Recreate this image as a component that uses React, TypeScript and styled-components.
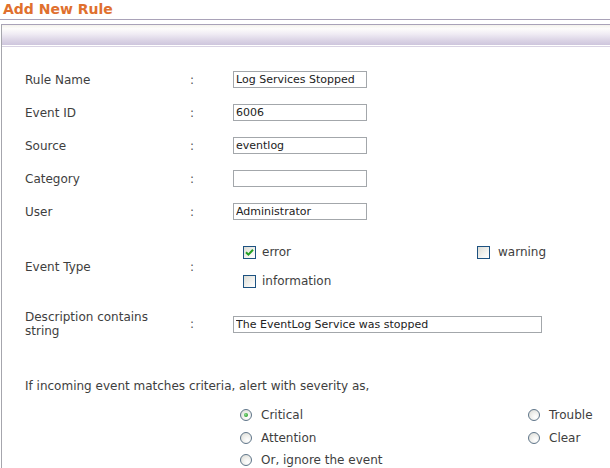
import React from "react";
import styled, { createGlobalStyle } from "styled-components";

const Global = createGlobalStyle`
  html, body { margin: 0; padding: 0; background: #fff; overflow: hidden; }
  body { font-family: "DejaVu Sans", Verdana, sans-serif; }
`;

const Page = styled.div`
  width: 610px;
  height: 468px;
  overflow: hidden;
  background: #fff;
`;

const Title = styled.h1`
  margin: 0;
  height: 19px;
  line-height: 19px;
  padding-left: 3px;
  font-size: 14px;
  font-weight: bold;
  color: #e0702e;
  border-bottom: 1px solid #a9a2b8;
`;

const Panel = styled.div`
  margin: 4px 0 0 1px;
  border-top: 1px solid #a9a2b8;
  border-left: 1px solid #a6a6ad;
  height: 600px;
`;

const PanelHeader = styled.div`
  height: 20px;
  background: linear-gradient(
    #f4f2ec 0%,
    #fdfcfb 18%,
    #f0ecf4 45%,
    #dcd5e6 75%,
    #cec6dd 100%
  );
  border-bottom: 1px solid #fff;
  box-shadow: 0 1px 0 #d9d3e3;
`;

const Form = styled.div`
  padding: 17px 0 0 23px;
  color: #3e3e3e;
  font-size: 12px;
`;

const Row = styled.div<{ $h: number }>`
  display: grid;
  grid-template-columns: 165px 43px 1fr;
  align-items: center;
  height: ${(p) => p.$h}px;
`;

const Label = styled.div`
  line-height: 14px;
`;

const Colon = styled.div`
  color: #555;
`;

const TextBox = styled.input<{ $w: number }>`
  box-sizing: border-box;
  width: ${(p) => p.$w}px;
  height: 17px;
  margin: 0;
  padding: 0 2px;
  border: 1px solid #a3a7ab;
  font-family: "DejaVu Sans", Verdana, sans-serif;
  font-size: 11px;
  color: #222;
  background: #fff;
  outline: none;
`;

const CheckGrid = styled.div`
  display: grid;
  grid-template-columns: 234px auto;
  grid-auto-rows: 29px;
  align-items: center;
  padding-left: 10px;
`;

const Option = styled.label<{ $gap: number }>`
  display: flex;
  align-items: center;
  gap: ${(p) => p.$gap}px;
  color: #3e3e3e;
`;

const Box = styled.span`
  box-sizing: border-box;
  width: 13px;
  height: 13px;
  border: 1px solid #1d5281;
  background: linear-gradient(135deg, #dcdcd5 0%, #f3f3f0 60%, #ffffff 100%);
  display: flex;
  align-items: center;
  justify-content: center;
`;

const Sentence = styled.div`
  margin-top: 35px;
  line-height: 16px;
`;

const RadioGrid = styled.div`
  display: grid;
  grid-template-columns: 288px auto;
  grid-auto-rows: 22.5px;
  align-items: center;
  margin-top: 10px;
  padding-left: 215px;
`;

const Radio = styled.span<{ $on?: boolean }>`
  box-sizing: border-box;
  width: 12px;
  height: 12px;
  border-radius: 50%;
  border: 1px solid #5f7589;
  background: radial-gradient(circle at 65% 70%, #ffffff 0%, #f2f2ef 40%, #d8d8d2 100%);
  display: flex;
  align-items: center;
  justify-content: center;
  &::after {
    content: "";
    display: ${(p) => (p.$on ? "block" : "none")};
    width: 4px;
    height: 4px;
    border-radius: 50%;
    background: radial-gradient(circle at 40% 40%, #8ee08e 0%, #2f9f2f 70%);
  }
`;

const Check = () => (
  <svg width="9" height="9" viewBox="0 0 9 9">
    <path d="M1 4.2 L3.4 6.6 L8 1.8" fill="none" stroke="#22a022" strokeWidth="2" />
  </svg>
);

const fields: { label: string; value: string }[] = [
  { label: "Rule Name", value: "Log Services Stopped" },
  { label: "Event ID", value: "6006" },
  { label: "Source", value: "eventlog" },
  { label: "Category", value: "" },
  { label: "User", value: "Administrator" },
];

export default function App() {
  return (
    <Page>
      <Global />
      <Title>Add New Rule</Title>
      <Panel>
        <PanelHeader />
        <Form>
          {fields.map((f) => (
            <Row key={f.label} $h={33}>
              <Label>{f.label}</Label>
              <Colon>:</Colon>
              <div>
                <TextBox $w={134} readOnly value={f.value} />
              </div>
            </Row>
          ))}
          <Row $h={77}>
            <Label>Event Type</Label>
            <Colon>:</Colon>
            <CheckGrid>
              <Option $gap={6}>
                <Box>
                  <Check />
                </Box>
                error
              </Option>
              <Option $gap={8}>
                <Box />
                warning
              </Option>
              <Option $gap={6}>
                <Box />
                information
              </Option>
            </CheckGrid>
          </Row>
          <Row $h={38}>
            <Label>
              Description contains
              <br />
              string
            </Label>
            <Colon>:</Colon>
            <div>
              <TextBox $w={309} readOnly value="The EventLog Service was stopped" />
            </div>
          </Row>
          <Sentence>If incoming event matches criteria, alert with severity as,</Sentence>
          <RadioGrid>
            <Option $gap={9}>
              <Radio $on />
              Critical
            </Option>
            <Option $gap={9}>
              <Radio />
              Trouble
            </Option>
            <Option $gap={9}>
              <Radio />
              Attention
            </Option>
            <Option $gap={9}>
              <Radio />
              Clear
            </Option>
            <Option $gap={9}>
              <Radio />
              Or, ignore the event
            </Option>
          </RadioGrid>
        </Form>
      </Panel>
    </Page>
  );
}
